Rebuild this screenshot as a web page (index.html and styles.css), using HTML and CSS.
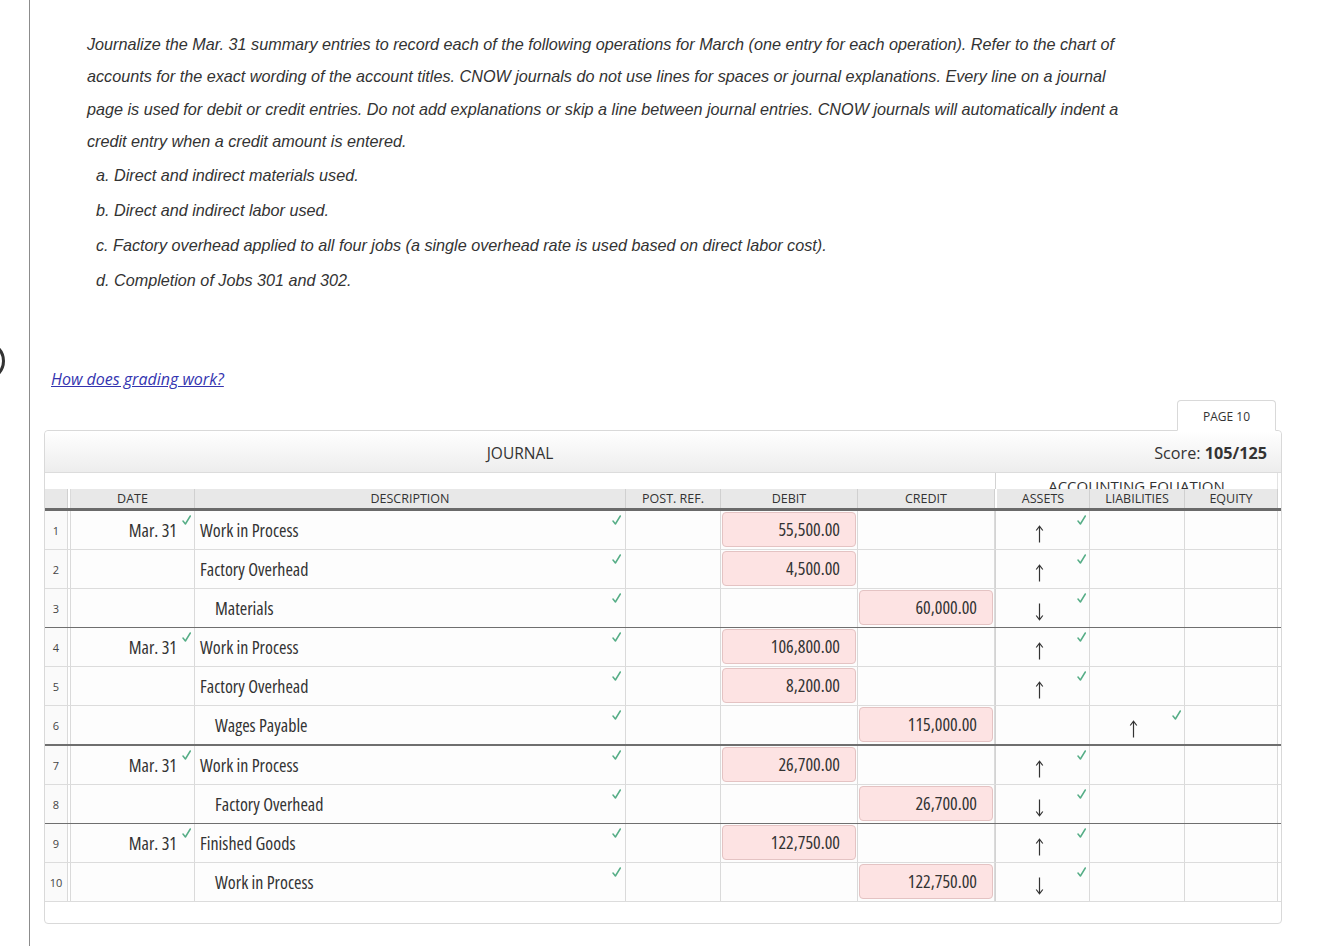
FILE: index.html
```html
<!DOCTYPE html>
<html>
<head>
<meta charset="utf-8">
<link rel="stylesheet" href="styles.css">
</head>
<body>
<div class="ring"></div>
<div class="page">
  <div class="question">
    <p class="prompt">Journalize the Mar. 31 summary entries to record each of the following operations for March (one entry for each operation). Refer to the chart of accounts for the exact wording of the account titles. CNOW journals do not use lines for spaces or journal explanations. Every line on a journal page is used for debit or credit entries. Do not add explanations or skip a line between journal entries. CNOW journals will automatically indent a credit entry when a credit amount is entered.</p>
    <ul class="steps">
      <li>a. Direct and indirect materials used.</li>
      <li>b. Direct and indirect labor used.</li>
      <li>c. Factory overhead applied to all four jobs (a single overhead rate is used based on direct labor cost).</li>
      <li>d. Completion of Jobs 301 and 302.</li>
    </ul>
  </div>

  <a class="grading" href="#">How does grading work?</a>

  <div class="journal-wrap">
    <div class="tabs"><div class="tab">PAGE 10</div></div>
    <div class="journal">
      <div class="jhead">
        <div class="jtitle">JOURNAL</div>
        <div class="score">Score: <b>105/125</b></div>
      </div>
      <div class="eqrow"><div class="eqtitle">ACCOUNTING EQUATION</div></div>

      <div class="row head">
        <div class="c num"></div><div class="sp"></div>
        <div class="c date">DATE</div>
        <div class="c desc">DESCRIPTION</div>
        <div class="c">POST. REF.</div>
        <div class="c">DEBIT</div>
        <div class="c">CREDIT</div>
        <div class="c eqfirst">ASSETS</div>
        <div class="c">LIABILITIES</div>
        <div class="c">EQUITY</div>
      </div>

      <!-- 1 -->
      <div class="row">
        <div class="c num">1</div><div class="sp"></div>
        <div class="c date">Mar. 31<svg class="ok" viewBox="0 0 9 10"><path d="M1 6 L3.4 9 L8.3 1"/></svg></div>
        <div class="c desc">Work in Process<svg class="ok" viewBox="0 0 9 10"><path d="M1 6 L3.4 9 L8.3 1"/></svg></div>
        <div class="c"></div>
        <div class="c amt"><div class="box">55,500.00</div></div>
        <div class="c amt"></div>
        <div class="c eq eqfirst"><svg class="arr" viewBox="0 0 9 18"><path d="M4.5 1.5 V17.5 M1.2 5.5 L4.5 1.2 L7.8 5.5"/></svg><svg class="ok" viewBox="0 0 9 10"><path d="M1 6 L3.4 9 L8.3 1"/></svg></div>
        <div class="c eq"></div>
        <div class="c eq"></div>
      </div>
      <!-- 2 -->
      <div class="row">
        <div class="c num">2</div><div class="sp"></div>
        <div class="c date"></div>
        <div class="c desc">Factory Overhead<svg class="ok" viewBox="0 0 9 10"><path d="M1 6 L3.4 9 L8.3 1"/></svg></div>
        <div class="c"></div>
        <div class="c amt"><div class="box">4,500.00</div></div>
        <div class="c amt"></div>
        <div class="c eq eqfirst"><svg class="arr" viewBox="0 0 9 18"><path d="M4.5 1.5 V17.5 M1.2 5.5 L4.5 1.2 L7.8 5.5"/></svg><svg class="ok" viewBox="0 0 9 10"><path d="M1 6 L3.4 9 L8.3 1"/></svg></div>
        <div class="c eq"></div>
        <div class="c eq"></div>
      </div>
      <!-- 3 -->
      <div class="row sep">
        <div class="c num">3</div><div class="sp"></div>
        <div class="c date"></div>
        <div class="c desc cr">Materials<svg class="ok" viewBox="0 0 9 10"><path d="M1 6 L3.4 9 L8.3 1"/></svg></div>
        <div class="c"></div>
        <div class="c amt"></div>
        <div class="c amt"><div class="box">60,000.00</div></div>
        <div class="c eq eqfirst"><svg class="arr" viewBox="0 0 9 18"><path d="M4.5 0.5 V16.5 M1.2 12.5 L4.5 16.8 L7.8 12.5"/></svg><svg class="ok" viewBox="0 0 9 10"><path d="M1 6 L3.4 9 L8.3 1"/></svg></div>
        <div class="c eq"></div>
        <div class="c eq"></div>
      </div>
      <!-- 4 -->
      <div class="row">
        <div class="c num">4</div><div class="sp"></div>
        <div class="c date">Mar. 31<svg class="ok" viewBox="0 0 9 10"><path d="M1 6 L3.4 9 L8.3 1"/></svg></div>
        <div class="c desc">Work in Process<svg class="ok" viewBox="0 0 9 10"><path d="M1 6 L3.4 9 L8.3 1"/></svg></div>
        <div class="c"></div>
        <div class="c amt"><div class="box">106,800.00</div></div>
        <div class="c amt"></div>
        <div class="c eq eqfirst"><svg class="arr" viewBox="0 0 9 18"><path d="M4.5 1.5 V17.5 M1.2 5.5 L4.5 1.2 L7.8 5.5"/></svg><svg class="ok" viewBox="0 0 9 10"><path d="M1 6 L3.4 9 L8.3 1"/></svg></div>
        <div class="c eq"></div>
        <div class="c eq"></div>
      </div>
      <!-- 5 -->
      <div class="row">
        <div class="c num">5</div><div class="sp"></div>
        <div class="c date"></div>
        <div class="c desc">Factory Overhead<svg class="ok" viewBox="0 0 9 10"><path d="M1 6 L3.4 9 L8.3 1"/></svg></div>
        <div class="c"></div>
        <div class="c amt"><div class="box">8,200.00</div></div>
        <div class="c amt"></div>
        <div class="c eq eqfirst"><svg class="arr" viewBox="0 0 9 18"><path d="M4.5 1.5 V17.5 M1.2 5.5 L4.5 1.2 L7.8 5.5"/></svg><svg class="ok" viewBox="0 0 9 10"><path d="M1 6 L3.4 9 L8.3 1"/></svg></div>
        <div class="c eq"></div>
        <div class="c eq"></div>
      </div>
      <!-- 6 -->
      <div class="row sep thick">
        <div class="c num">6</div><div class="sp"></div>
        <div class="c date"></div>
        <div class="c desc cr">Wages Payable<svg class="ok" viewBox="0 0 9 10"><path d="M1 6 L3.4 9 L8.3 1"/></svg></div>
        <div class="c"></div>
        <div class="c amt"></div>
        <div class="c amt"><div class="box">115,000.00</div></div>
        <div class="c eq eqfirst"></div>
        <div class="c eq"><svg class="arr" viewBox="0 0 9 18"><path d="M4.5 1.5 V17.5 M1.2 5.5 L4.5 1.2 L7.8 5.5"/></svg><svg class="ok" viewBox="0 0 9 10"><path d="M1 6 L3.4 9 L8.3 1"/></svg></div>
        <div class="c eq"></div>
      </div>
      <!-- 7 -->
      <div class="row">
        <div class="c num">7</div><div class="sp"></div>
        <div class="c date">Mar. 31<svg class="ok" viewBox="0 0 9 10"><path d="M1 6 L3.4 9 L8.3 1"/></svg></div>
        <div class="c desc">Work in Process<svg class="ok" viewBox="0 0 9 10"><path d="M1 6 L3.4 9 L8.3 1"/></svg></div>
        <div class="c"></div>
        <div class="c amt"><div class="box">26,700.00</div></div>
        <div class="c amt"></div>
        <div class="c eq eqfirst"><svg class="arr" viewBox="0 0 9 18"><path d="M4.5 1.5 V17.5 M1.2 5.5 L4.5 1.2 L7.8 5.5"/></svg><svg class="ok" viewBox="0 0 9 10"><path d="M1 6 L3.4 9 L8.3 1"/></svg></div>
        <div class="c eq"></div>
        <div class="c eq"></div>
      </div>
      <!-- 8 -->
      <div class="row sep">
        <div class="c num">8</div><div class="sp"></div>
        <div class="c date"></div>
        <div class="c desc cr">Factory Overhead<svg class="ok" viewBox="0 0 9 10"><path d="M1 6 L3.4 9 L8.3 1"/></svg></div>
        <div class="c"></div>
        <div class="c amt"></div>
        <div class="c amt"><div class="box">26,700.00</div></div>
        <div class="c eq eqfirst"><svg class="arr" viewBox="0 0 9 18"><path d="M4.5 0.5 V16.5 M1.2 12.5 L4.5 16.8 L7.8 12.5"/></svg><svg class="ok" viewBox="0 0 9 10"><path d="M1 6 L3.4 9 L8.3 1"/></svg></div>
        <div class="c eq"></div>
        <div class="c eq"></div>
      </div>
      <!-- 9 -->
      <div class="row">
        <div class="c num">9</div><div class="sp"></div>
        <div class="c date">Mar. 31<svg class="ok" viewBox="0 0 9 10"><path d="M1 6 L3.4 9 L8.3 1"/></svg></div>
        <div class="c desc">Finished Goods<svg class="ok" viewBox="0 0 9 10"><path d="M1 6 L3.4 9 L8.3 1"/></svg></div>
        <div class="c"></div>
        <div class="c amt"><div class="box">122,750.00</div></div>
        <div class="c amt"></div>
        <div class="c eq eqfirst"><svg class="arr" viewBox="0 0 9 18"><path d="M4.5 1.5 V17.5 M1.2 5.5 L4.5 1.2 L7.8 5.5"/></svg><svg class="ok" viewBox="0 0 9 10"><path d="M1 6 L3.4 9 L8.3 1"/></svg></div>
        <div class="c eq"></div>
        <div class="c eq"></div>
      </div>
      <!-- 10 -->
      <div class="row">
        <div class="c num">10</div><div class="sp"></div>
        <div class="c date"></div>
        <div class="c desc cr">Work in Process<svg class="ok" viewBox="0 0 9 10"><path d="M1 6 L3.4 9 L8.3 1"/></svg></div>
        <div class="c"></div>
        <div class="c amt"></div>
        <div class="c amt"><div class="box">122,750.00</div></div>
        <div class="c eq eqfirst"><svg class="arr" viewBox="0 0 9 18"><path d="M4.5 0.5 V16.5 M1.2 12.5 L4.5 16.8 L7.8 12.5"/></svg><svg class="ok" viewBox="0 0 9 10"><path d="M1 6 L3.4 9 L8.3 1"/></svg></div>
        <div class="c eq"></div>
        <div class="c eq"></div>
      </div>
    </div>
  </div>
</div>
</body>
</html>
```

FILE: styles.css
```css
html, body {
  margin: 0;
  padding: 0;
  background: #fff;
  overflow: hidden;
}
body {
  position: relative;
  width: 1324px;
  height: 946px;
  font-family: "Open Sans", "Liberation Sans", sans-serif;
  color: #333;
}
.ring {
  position: absolute;
  left: -35px;
  top: 341px;
  width: 34px;
  height: 34px;
  border: 3px solid #333;
  border-radius: 50%;
}
.page {
  margin-left: 29px;
  border-left: 1px solid #8c8c8c;
  height: 946px;
  box-sizing: border-box;
  padding-top: 28px;
}
.question {
  padding-left: 57px;
}
.prompt {
  margin: 0;
  width: 1042px;
  font-family: "Liberation Sans", Arial, sans-serif;
  font-style: italic;
  font-size: 16.2px;
  line-height: 32.4px;
  color: #333;
}
.steps {
  list-style: none;
  margin: 0;
  padding: 0 0 0 9px;
  font-family: "Liberation Sans", Arial, sans-serif;
  font-style: italic;
  font-size: 16.2px;
  line-height: 35px;
  color: #333;
}
.grading {
  display: block;
  width: fit-content;
  margin: 70.4px 0 0 21px;
  font-family: "Open Sans", sans-serif;
  font-style: italic;
  font-size: 16px;
  line-height: 22px;
  color: #3434b0;
  text-decoration: underline;
}
.journal-wrap {
  margin: 10px 0 0 14px;
  width: 1238px;
}
.tabs {
  display: flex;
  justify-content: flex-end;
  padding-right: 6px;
  position: relative;
  z-index: 2;
  margin-bottom: -1px;
}
.tab {
  width: 99px;
  height: 31px;
  box-sizing: border-box;
  border: 1px solid #d9d9d9;
  border-bottom: 1px solid #fff;
  border-radius: 4px 4px 0 0;
  background: #fff;
  font-size: 12px;
  line-height: 31px;
  text-align: center;
  color: #333;
}
.journal {
  border: 1px solid #d9d9d9;
  border-radius: 4px;
  background: #fff;
  padding-bottom: 21px;
}
.jhead {
  height: 41px;
  box-sizing: content-box;
  display: flex;
  align-items: center;
  padding-top: 3px;
  height: 38px;
  background: linear-gradient(#ffffff, #ededed);
  border-bottom: 1px solid #dcdcdc;
  border-radius: 4px 4px 0 0;
  font-size: 15.5px;
}
.jtitle {
  width: 950px;
  text-align: center;
}
.score {
  flex: 1;
  text-align: right;
  padding-right: 14px;
  font-size: 16.2px;
}
.score b {
  font-weight: 700;
}
.eqrow {
  height: 16px;
  display: flex;
  justify-content: flex-end;
  padding-right: 3px;
}
.eqtitle {
  width: 283px;
  box-sizing: border-box;
  border-left: 1px solid #d3d3d3;
  border-right: 1px solid #e3e3e3;
  height: 16px;
  overflow: hidden;
  padding-top: 5px;
  font-size: 15px;
  line-height: 17px;
  text-align: center;
  color: #333;
}
.row {
  display: grid;
  grid-template-columns: 23px 2px 125px 431px 95px 137px 137px 95px 95px 93px;
  height: 39px;
  box-sizing: border-box;
  border-bottom: 1px solid #dcdcdc;
  font-family: "Liberation Sans Narrow", "Open Sans", sans-serif;
  font-stretch: condensed;
  font-size: 18px;
  color: #333;
}
.row.sep {
  border-bottom: 1px solid #6f6f6f;
}
.row.sep.thick {
  border-bottom: 2px solid #6f6f6f;
  height: 40px;
}
.row.head {
  height: 22px;
  border-bottom: 3px solid #6a6a6a;
  font-family: "Open Sans", sans-serif;
  font-stretch: normal;
  font-size: 12.5px;
}
.row.head .c {
  background: #e8e8e8;
  justify-content: center;
  line-height: 19px;
  border-right-color: #d0d0d0;
}
.c {
  position: relative;
  display: flex;
  align-items: center;
  box-sizing: border-box;
  border-right: 1px solid #dadada;
  background: #fdfdfd;
  min-width: 0;
}
.sp {
  background: #fff;
}
.c.num {
  justify-content: center;
  font-size: 11px;
  color: #444;
  font-family: "Open Sans", sans-serif;
  font-stretch: normal;
  background: #fafafa;
}
.c.date {
  border-left: 1px solid #dadada;
  justify-content: flex-end;
  padding-right: 17px;
}
.row.head .c.date {
  justify-content: center;
  padding-right: 0;
}
.c.desc {
  padding-left: 5px;
}
.row.head .c.desc {
  padding-left: 0;
}
.c.desc.cr {
  padding-left: 20px;
}
.c.amt {
  align-items: flex-start;
  padding: 1px 1px 0 1px;
}
.box {
  flex: 1;
  height: 35px;
  box-sizing: border-box;
  border: 1px solid #e4c3c3;
  border-radius: 4px;
  background: #fde3e3;
  text-align: right;
  padding-right: 15px;
  line-height: 33px;
}
.c.eq {
  justify-content: center;
  padding-right: 7px;
  padding-top: 8px;
}
.c.eqfirst {
  border-left: 1px solid #d3d3d3;
}
.row.head .c.eqfirst {
  border-left: 2px solid #fff;
}
.arr {
  width: 9px;
  height: 18px;
  fill: none;
  stroke: #333;
  stroke-width: 1.2;
}
.ok {
  position: absolute;
  top: 4px;
  right: 3px;
  width: 9px;
  height: 10px;
  fill: none;
  stroke: #55ad86;
  stroke-width: 1.5;
  stroke-linecap: round;
  stroke-linejoin: round;
}
.c.desc .ok {
  right: 4px;
}
```
